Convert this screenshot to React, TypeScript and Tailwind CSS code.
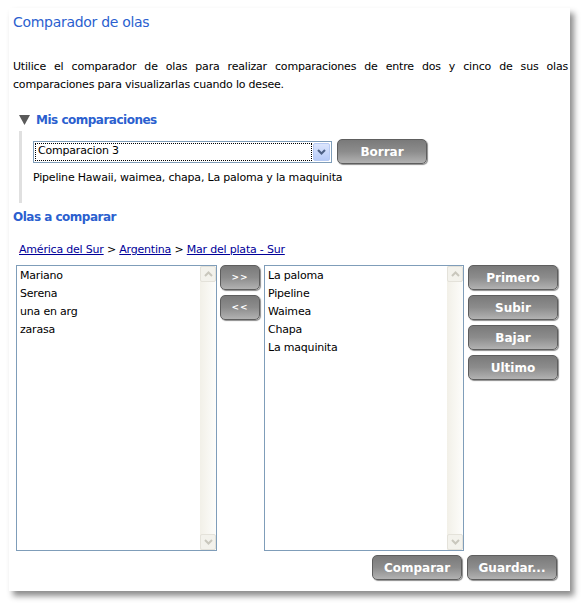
import React from "react";

const font = { fontFamily: '"DejaVu Sans", Verdana, sans-serif' };

function GrayButton({ label, w, small }: { label: string; w: string; small?: boolean }) {
  return (
    <button
      className={`${w} h-[25px] rounded-[5px] border border-[#5e5e5e] bg-gradient-to-b from-[#7a7a7a] via-[#8c8c8c] to-[#b2b2b2] text-white shadow-[1px_1px_1px_rgba(0,0,0,0.45)] ${
        small ? "text-[9px] font-bold tracking-[1px]" : "text-[12px] font-bold tracking-[0px]"
      } leading-none`}
      style={font}
    >
      {label}
    </button>
  );
}

function Chevron({ up, color }: { up?: boolean; color: string }) {
  return (
    <svg width="9" height="6" viewBox="0 0 9 6">
      <path
        d={up ? "M1 5 L4.5 1.5 L8 5" : "M1 1 L4.5 4.5 L8 1"}
        fill="none"
        stroke={color}
        strokeWidth="2"
      />
    </svg>
  );
}

function ListBox({ items, w }: { items: string[]; w: string }) {
  return (
    <div className={`${w} h-[286px] border border-[#7f9db9] bg-white flex`}>
      <ul className="flex-1 pl-[3px] pt-[1px] text-[11px] leading-[18px] tracking-[-0.2px] text-black">
        {items.map((it) => (
          <li key={it}>{it}</li>
        ))}
      </ul>
      <div className="w-[16px] flex flex-col justify-between bg-gradient-to-r from-[#f2f0e8] to-[#fdfdfb]">
        <div className="h-[16px] rounded-[2px] border border-[#e4e2da] bg-[#f3f2ec] flex items-center justify-center">
          <Chevron up color="#c9c7bd" />
        </div>
        <div className="h-[16px] rounded-[2px] border border-[#e4e2da] bg-[#f3f2ec] flex items-center justify-center">
          <Chevron color="#c9c7bd" />
        </div>
      </div>
    </div>
  );
}

export default function App() {
  return (
    <div className="w-[584px] h-[605px] bg-white pt-[8px] pl-[9px]" style={font}>
      <div className="w-[561px] h-[583px] bg-white shadow-[4px_5px_6px_rgba(0,0,0,0.45)] pl-[4px] pr-[2px]">
        <h1 className="pt-[4px] text-[14px] leading-[20px] tracking-[-0.3px] text-[#2b5fcf]">
          Comparador de olas
        </h1>

        <p className="mt-[26px] text-[11px] leading-[18px] tracking-[-0.2px] text-black text-justify">
          Utilice el comparador de olas para realizar comparaciones de entre dos y cinco de sus olas
          comparaciones para visualizarlas cuando lo desee.
        </p>

        <div className="mt-[18px] flex items-center h-[16px] pl-[6px]">
          <svg width="11" height="10" viewBox="0 0 11 10">
            <polygon points="0,0 11,0 5.5,10" fill="#5a5a5a" />
          </svg>
          <span className="ml-[6px] text-[12px] font-bold tracking-[-0.5px] text-[#2b5fcf]">
            Mis comparaciones
          </span>
        </div>

        <div className="ml-[6px] mt-[3px] border-l-[3px] border-[#e0e0e0] pl-[11px] pt-[8px] h-[72px]">
          <div className="flex items-center gap-[5px]">
            <div className="w-[299px] h-[22px] border border-[#7f9db9] bg-white flex items-center p-[1px]">
              <div className="flex-1 h-full border border-dotted border-black flex items-center pl-[2px] text-[11px] tracking-[-0.2px]">
                Comparacion 3
              </div>
              <div className="w-[17px] h-full ml-[1px] rounded-[2px] border border-[#b8cbf4] bg-gradient-to-b from-[#dce6fd] to-[#b7cbf8] flex items-center justify-center">
                <Chevron color="#4d6185" />
              </div>
            </div>
            <GrayButton label="Borrar" w="w-[90px]" />
          </div>
          <div className="mt-[5px] text-[11px] leading-[18px] tracking-[-0.2px] text-black">
            Pipeline Hawaii, waimea, chapa, La paloma y la maquinita
          </div>
        </div>

        <h2 className="mt-[6px] text-[12px] leading-[16px] font-bold tracking-[-0.5px] text-[#2b5fcf]">
          Olas a comparar
        </h2>

        <div className="mt-[17px] pl-[6px] text-[11px] leading-[16px] tracking-[-0.2px] text-black">
          <a className="text-[#000099] underline">América del Sur</a>
          {" > "}
          <a className="text-[#000099] underline">Argentina</a>
          {" > "}
          <a className="text-[#000099] underline">Mar del plata - Sur</a>
        </div>

        <div className="mt-[7px] ml-[3px] flex items-start">
          <ListBox items={["Mariano", "Serena", "una en arg", "zarasa"]} w="w-[201px]" />
          <div className="ml-[3px] flex flex-col gap-[5px]">
            <GrayButton label=">>" w="w-[40px]" small />
            <GrayButton label="<<" w="w-[40px]" small />
          </div>
          <div className="ml-[4px]">
            <ListBox
              items={["La paloma", "Pipeline", "Waimea", "Chapa", "La maquinita"]}
              w="w-[200px]"
            />
          </div>
          <div className="ml-[4px] flex flex-col gap-[5px]">
            <GrayButton label="Primero" w="w-[90px]" />
            <GrayButton label="Subir" w="w-[90px]" />
            <GrayButton label="Bajar" w="w-[90px]" />
            <GrayButton label="Ultimo" w="w-[90px]" />
          </div>
        </div>

        <div className="mt-[4px] flex justify-end gap-[5px] pr-[11px]">
          <GrayButton label="Comparar" w="w-[90px]" />
          <GrayButton label="Guardar..." w="w-[90px]" />
        </div>
      </div>
    </div>
  );
}
